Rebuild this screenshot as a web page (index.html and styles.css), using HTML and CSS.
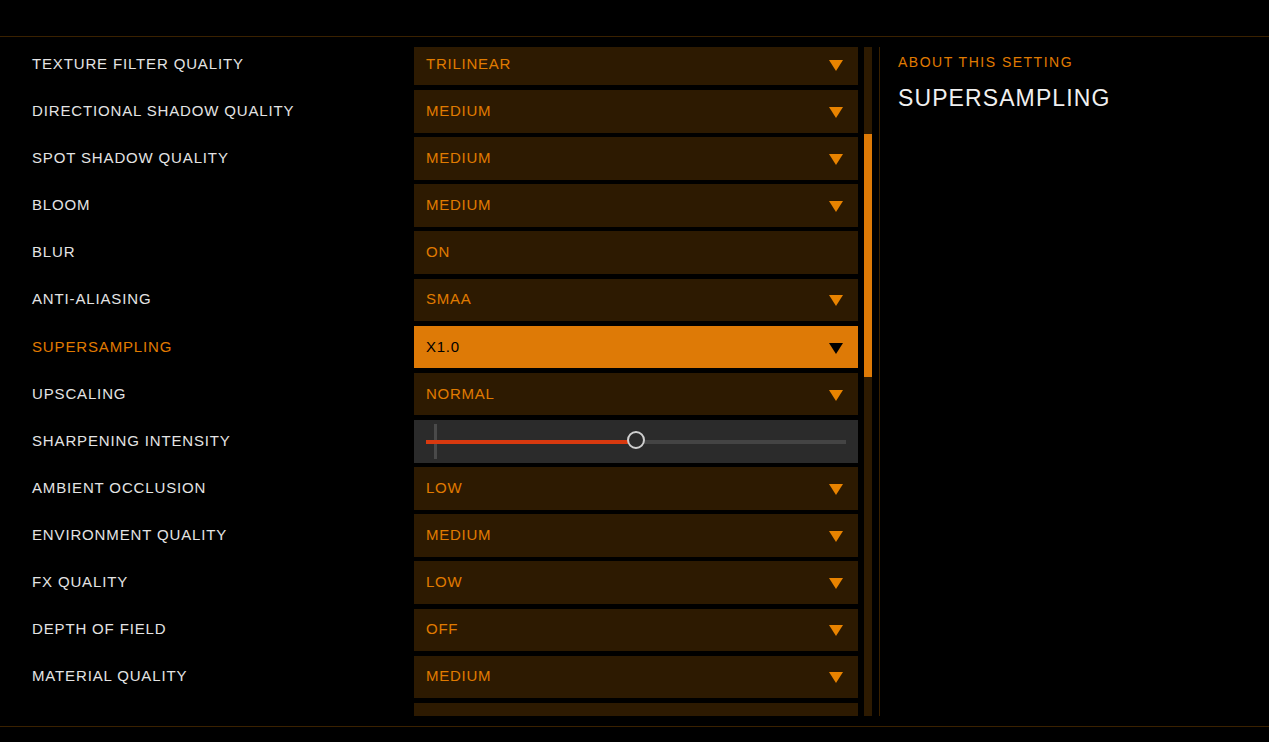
FILE: index.html
```html
<!DOCTYPE html>
<html lang="en">
<head>
    <meta charset="UTF-8">
    <meta name="viewport" content="width=device-width, initial-scale=1.0">
    <title>Graphics Settings</title>
    <link rel="stylesheet" href="styles.css">
</head>
<body>

    <div class="header"></div>

    <div class="main">
        <div class="list-wrap">
            <div class="list">
                <div class="row">
                    <span class="label">TEXTURE FILTER QUALITY</span>
                    <div class="box">TRILINEAR<span class="arrow"></span></div>
                </div>
                <div class="row">
                    <span class="label">DIRECTIONAL SHADOW QUALITY</span>
                    <div class="box">MEDIUM<span class="arrow"></span></div>
                </div>
                <div class="row">
                    <span class="label">SPOT SHADOW QUALITY</span>
                    <div class="box">MEDIUM<span class="arrow"></span></div>
                </div>
                <div class="row">
                    <span class="label">BLOOM</span>
                    <div class="box">MEDIUM<span class="arrow"></span></div>
                </div>
                <div class="row">
                    <span class="label">BLUR</span>
                    <div class="box">ON</div>
                </div>
                <div class="row">
                    <span class="label">ANTI-ALIASING</span>
                    <div class="box">SMAA<span class="arrow"></span></div>
                </div>
                <div class="row active">
                    <span class="label">SUPERSAMPLING</span>
                    <div class="box">X1.0<span class="arrow"></span></div>
                </div>
                <div class="row">
                    <span class="label">UPSCALING</span>
                    <div class="box">NORMAL<span class="arrow"></span></div>
                </div>
                <div class="row">
                    <span class="label">SHARPENING INTENSITY</span>
                    <div class="box slider">
                        <span class="tick"></span>
                        <div class="track">
                            <div class="fill" style="width: 50%"></div>
                            <span class="knob" style="left: 50%"></span>
                        </div>
                    </div>
                </div>
                <div class="row">
                    <span class="label">AMBIENT OCCLUSION</span>
                    <div class="box">LOW<span class="arrow"></span></div>
                </div>
                <div class="row">
                    <span class="label">ENVIRONMENT QUALITY</span>
                    <div class="box">MEDIUM<span class="arrow"></span></div>
                </div>
                <div class="row">
                    <span class="label">FX QUALITY</span>
                    <div class="box">LOW<span class="arrow"></span></div>
                </div>
                <div class="row">
                    <span class="label">DEPTH OF FIELD</span>
                    <div class="box">OFF<span class="arrow"></span></div>
                </div>
                <div class="row">
                    <span class="label">MATERIAL QUALITY</span>
                    <div class="box">MEDIUM<span class="arrow"></span></div>
                </div>
                <div class="row">
                    <span class="label"></span>
                    <div class="box"></div>
                </div>
            </div>
        </div>

        <div class="scrollbar">
            <div class="thumb"></div>
        </div>
        <div class="divider"></div>

        <div class="about">
            <div class="about-title">ABOUT THIS SETTING</div>
            <div class="about-name">SUPERSAMPLING</div>
        </div>
    </div>

    <div class="footer"></div>

</body>
</html>
```

FILE: styles.css
```css
body {
    margin: 0;
    background-color: #000;
    font-family: "Liberation Sans", Arial, sans-serif;
    color: #e4e4e4;
    height: 742px;
    overflow: hidden;
}
.header {
    height: 36px;
    border-bottom: 1px solid #3a2100;
}
.main {
    display: flex;
    height: 669px;
    padding: 10px 0;
}
.list-wrap {
    width: 858px;
    overflow: hidden;
}
.list {
    margin-top: -4.15px;
    display: flex;
    flex-direction: column;
    gap: 4.55px;
}
.row {
    display: flex;
    align-items: center;
    height: 42.6px;
}
.label {
    width: 382px;
    padding-left: 32px;
    padding-bottom: 2px;
    font-size: 15px;
    letter-spacing: 0.85px;
}
.box {
    flex: 1;
    height: 42.6px;
    display: flex;
    align-items: center;
    justify-content: space-between;
    padding: 0 15px 2px 12px;
    box-sizing: border-box;
    background-color: #2d1a01;
    color: #e07b00;
    font-size: 15px;
    letter-spacing: 0.75px;
}
.arrow {
    width: 0;
    height: 0;
    border-left: 7px solid transparent;
    border-right: 7px solid transparent;
    border-top: 11px solid #e88300;
    margin-top: 4px;
}
.row.active .label {
    color: #e07b00;
}
.row.active .box {
    background-color: #de7a06;
    color: #000;
}
.row.active .arrow {
    border-top-color: #000;
}
.box.slider {
    background-color: #2b2b2b;
    position: relative;
    padding: 2px 12px 0;
}
.tick {
    position: absolute;
    left: 20px;
    top: 4px;
    width: 3px;
    height: 35px;
    background-color: #4a4a4a;
}
.track {
    flex: 1;
    height: 4px;
    background-color: #444;
    position: relative;
}
.fill {
    height: 4px;
    background-color: #d8390f;
}
.knob {
    position: absolute;
    top: -8px;
    width: 18px;
    height: 18px;
    margin-left: -9px;
    margin-top: -1px;
    border: 2px solid #cfcfcf;
    border-radius: 50%;
    background-color: #2b2b2b;
    box-sizing: border-box;
}
.scrollbar {
    width: 8px;
    margin-left: 6px;
    background-color: #2d1a01;
}
.thumb {
    margin-top: 87px;
    height: 243px;
    background-color: #de7a06;
}
.divider {
    width: 1px;
    margin-left: 7px;
    background-color: #3a2100;
}
.about {
    padding-left: 18px;
    padding-top: 7px;
}
.about-title {
    color: #e07b00;
    font-size: 14px;
    letter-spacing: 1.5px;
}
.about-name {
    margin-top: 15px;
    font-size: 23px;
    letter-spacing: 1.1px;
    color: #f0f0f0;
}
.footer {
    border-top: 1px solid #3a2100;
}
```
